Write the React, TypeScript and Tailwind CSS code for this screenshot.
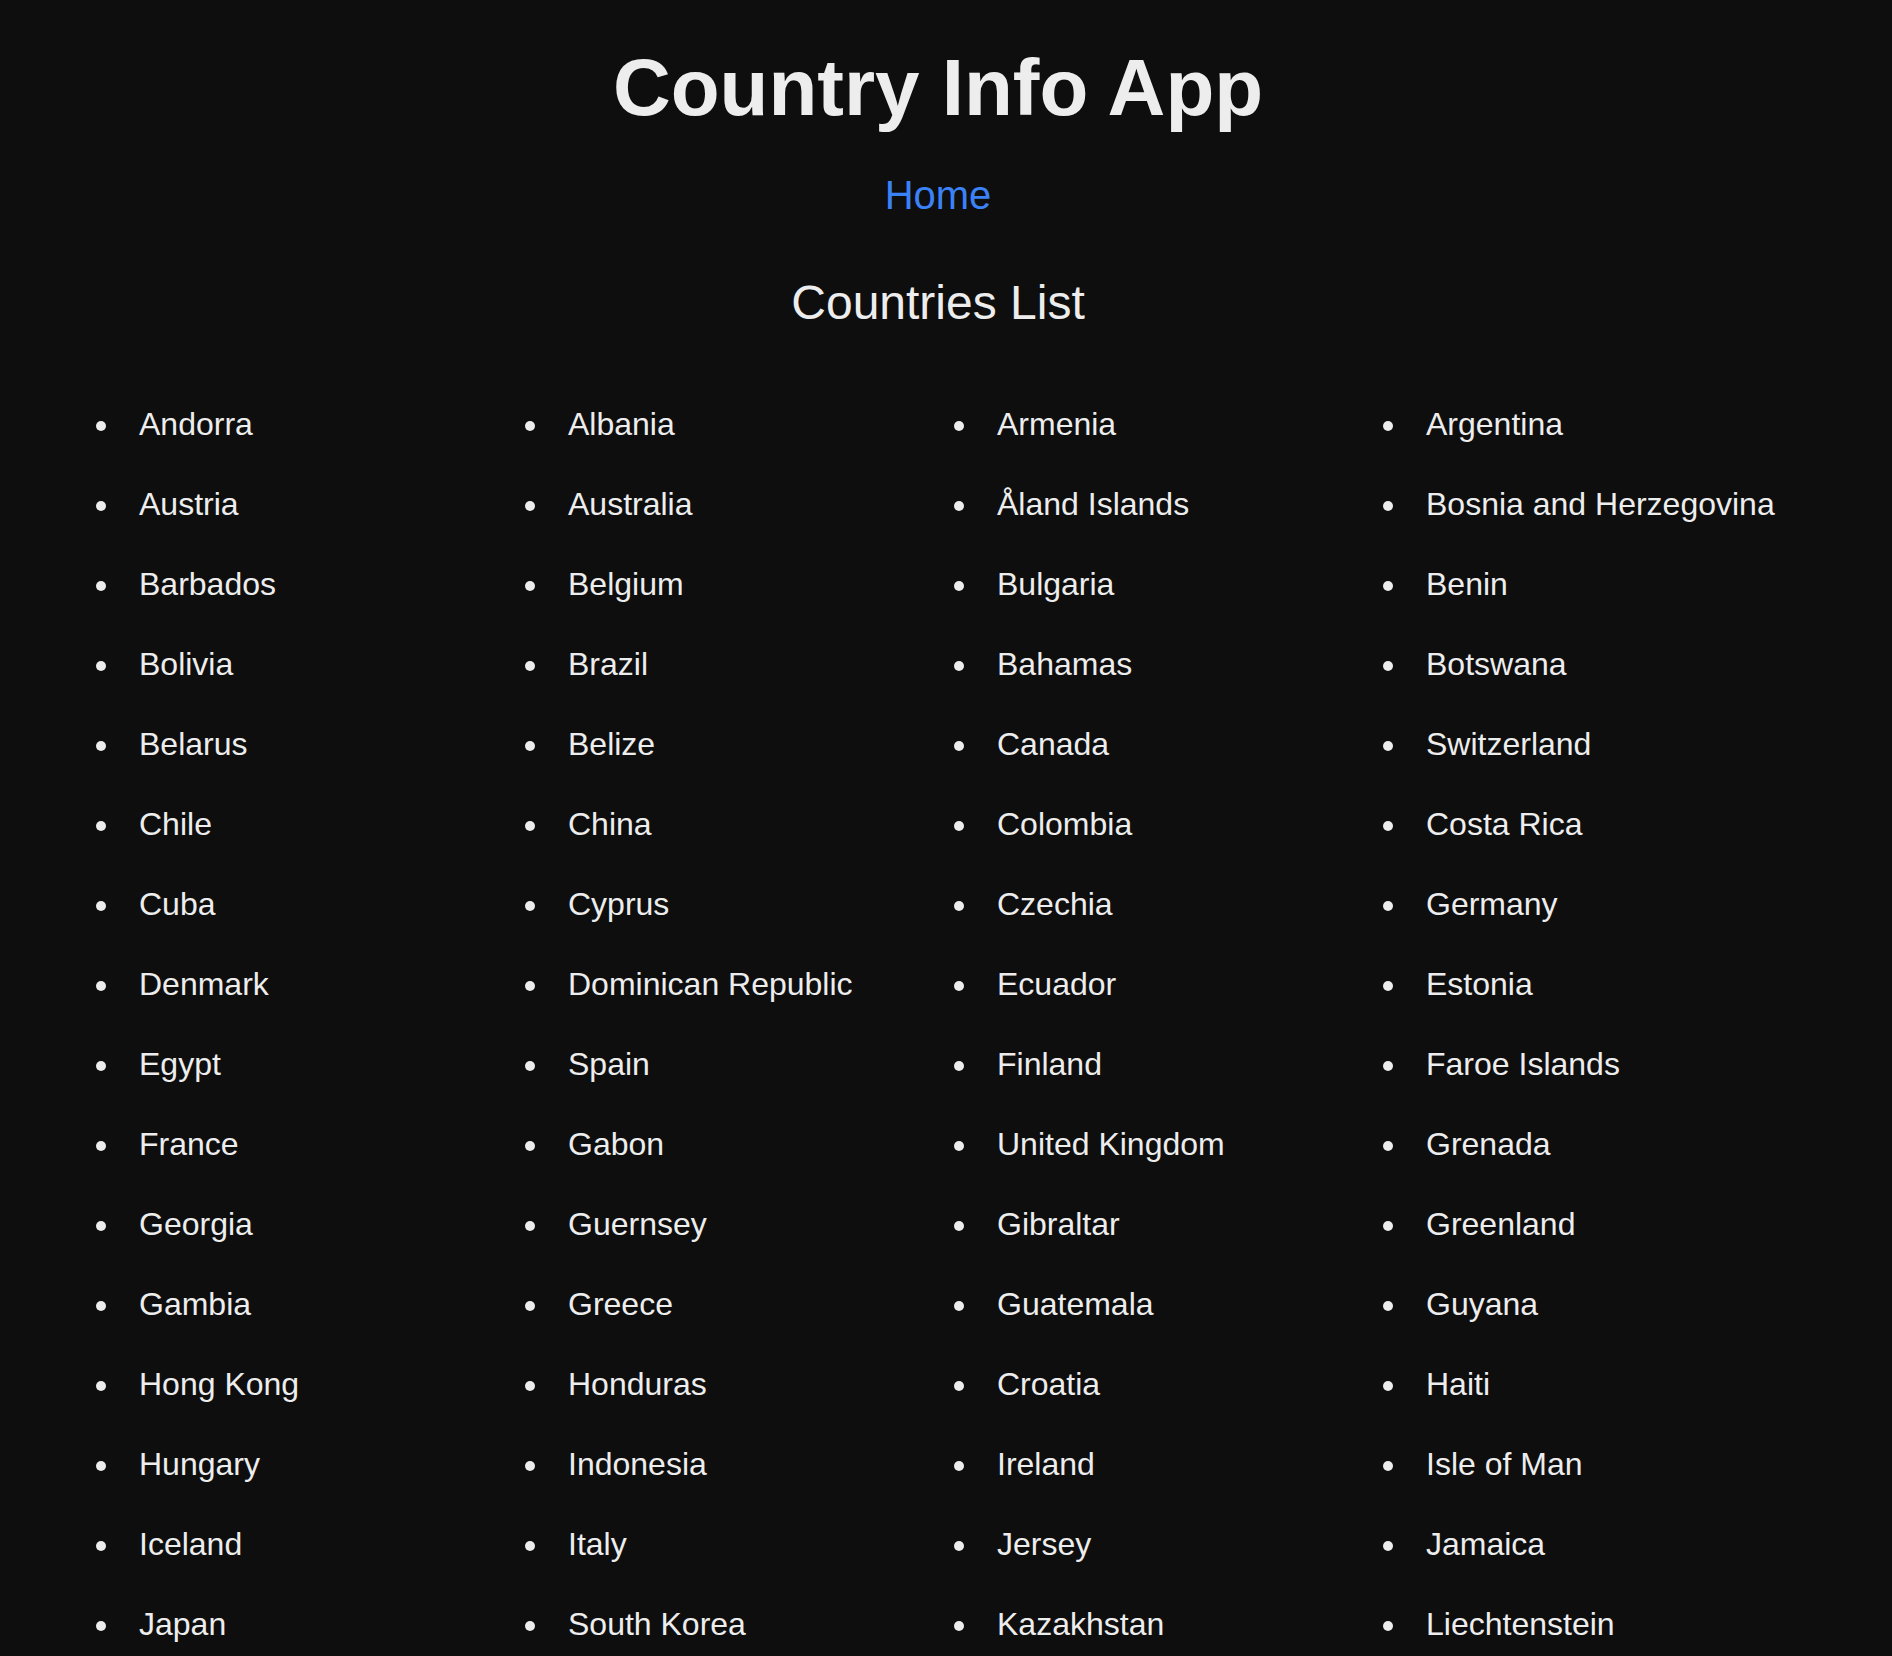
const countries = [
  "Andorra", "Albania", "Armenia", "Argentina",
  "Austria", "Australia", "Åland Islands", "Bosnia and Herzegovina",
  "Barbados", "Belgium", "Bulgaria", "Benin",
  "Bolivia", "Brazil", "Bahamas", "Botswana",
  "Belarus", "Belize", "Canada", "Switzerland",
  "Chile", "China", "Colombia", "Costa Rica",
  "Cuba", "Cyprus", "Czechia", "Germany",
  "Denmark", "Dominican Republic", "Ecuador", "Estonia",
  "Egypt", "Spain", "Finland", "Faroe Islands",
  "France", "Gabon", "United Kingdom", "Grenada",
  "Georgia", "Guernsey", "Gibraltar", "Greenland",
  "Gambia", "Greece", "Guatemala", "Guyana",
  "Hong Kong", "Honduras", "Croatia", "Haiti",
  "Hungary", "Indonesia", "Ireland", "Isle of Man",
  "Iceland", "Italy", "Jersey", "Jamaica",
  "Japan", "South Korea", "Kazakhstan", "Liechtenstein",
];

export default function App() {
  return (
    <div className="h-screen overflow-hidden bg-[#0e0e0e] text-[#ededed] font-['Liberation_Sans',Arial,sans-serif]">
      <div className="w-[1876px]">
        <header className="pt-[48px] text-center">
          <h1 className="text-[80px] font-bold leading-none">Country Info App</h1>
          <nav className="mt-[47px]">
            <a href="#" className="text-[40px] leading-none text-[#3b82f6]">
              Home
            </a>
          </nav>
        </header>

        <main className="mt-[63px]">
          <h2 className="text-center text-[48px] leading-none">Countries List</h2>

          {/* Country grid */}
          <ul className="mt-[57px] grid grid-cols-4 px-[80px]">
            {countries.map((name) => (
              <li key={name} className="flex h-[80px] items-center">
                <span className="ml-[16px] mt-[4px] h-[10px] w-[10px] shrink-0 rounded-full bg-[#ededed]"></span>
                <span className="ml-[33px] text-[32px] leading-normal">{name}</span>
              </li>
            ))}
          </ul>
        </main>
      </div>
    </div>
  );
}
